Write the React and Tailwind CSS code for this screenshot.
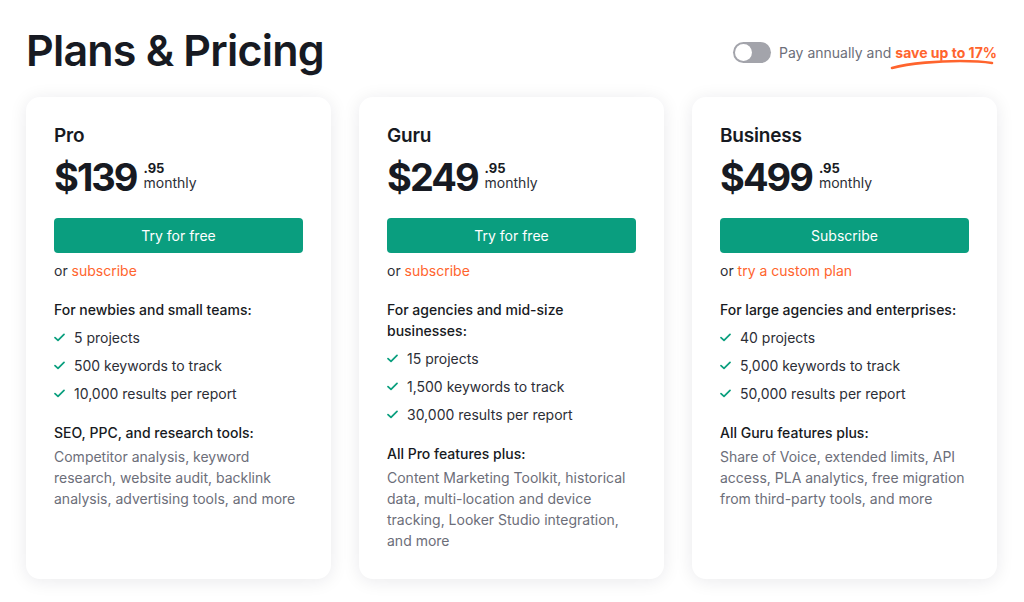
import React from "react";

const plans = [
  {
    name: "Pro",
    price: "$139",
    cta: "Try for free",
    orText: "subscribe",
    heading: "For newbies and small teams:",
    items: ["5 projects", "500 keywords to track", "10,000 results per report"],
    extraHeading: "SEO, PPC, and research tools:",
    extra: "Competitor analysis, keyword research, website audit, backlink analysis, advertising tools, and more",
  },
  {
    name: "Guru",
    price: "$249",
    cta: "Try for free",
    orText: "subscribe",
    heading: "For agencies and mid-size businesses:",
    items: ["15 projects", "1,500 keywords to track", "30,000 results per report"],
    extraHeading: "All Pro features plus:",
    extra: "Content Marketing Toolkit, historical data, multi-location and device tracking, Looker Studio integration, and more",
  },
  {
    name: "Business",
    price: "$499",
    cta: "Subscribe",
    orText: "try a custom plan",
    heading: "For large agencies and enterprises:",
    items: ["40 projects", "5,000 keywords to track", "50,000 results per report"],
    extraHeading: "All Guru features plus:",
    extra: "Share of Voice, extended limits, API access, PLA analytics, free migration from third-party tools, and more",
  },
];

function Check() {
  return (
    <svg width="11" height="9" viewBox="0 0 11 9" fill="none" className="shrink-0">
      <path d="M1 4.6 L4 7.4 L10 1.4" stroke="#0a9f7e" strokeWidth="1.7" strokeLinecap="round" strokeLinejoin="round" />
    </svg>
  );
}

function Card({ p }) {
  return (
    <div className="w-[305px] h-[482px] bg-white rounded-[14px] shadow-[0_2px_18px_rgba(20,20,40,0.09)] px-[28px] pt-[27px] flex flex-col text-[#171a22]">
      <div className="text-[19px] leading-[24px] font-semibold tracking-[-0.2px]">{p.name}</div>
      <div className="flex items-start mt-[7px] h-[44px]">
        <span className="text-[38px] leading-[44px] font-bold tracking-[-2px]">{p.price}</span>
        <div className="flex flex-col ml-[7px] mt-[6px]">
          <span className="text-[13px] leading-[14px] font-bold">.95</span>
          <span className="text-[14px] leading-[15px] text-[#2c2e36]">monthly</span>
        </div>
      </div>
      <button className="mt-[19px] h-[35px] w-full rounded-[4px] bg-[#0a9e7f] text-white text-[14px]">{p.cta}</button>
      <div className="mt-[7px] text-[14px] leading-[21px] text-[#2c2e36]">
        or <span className="text-[#ff642d]">{p.orText}</span>
      </div>
      <div className="mt-[18px] text-[14px] leading-[21px] font-medium">{p.heading}</div>
      <div className="mt-[7px] flex flex-col gap-[7px]">
        {p.items.map((it) => (
          <div key={it} className="flex items-center gap-[9px] text-[14px] leading-[21px] text-[#2c2e36]">
            <Check />
            <span>{it}</span>
          </div>
        ))}
      </div>
      <div className="mt-[18px] text-[14px] leading-[21px] font-medium">{p.extraHeading}</div>
      <div className="mt-[3px] text-[14px] leading-[21px] text-[#6c6e79]">{p.extra}</div>
    </div>
  );
}

export default function App() {
  return (
    <div className="w-[1024px] h-[602px] bg-white overflow-hidden" style={{ fontFamily: "Inter, 'Noto Sans', sans-serif" }}>
      <div className="flex items-center justify-between pl-[26px] pr-[27px] pt-[24px] h-[97px] pb-[22px]">
        <h1 className="text-[43px] leading-[52px] font-semibold tracking-[-0.8px] text-[#171a22]">Plans &amp; Pricing</h1>
        <div className="flex items-center mt-[6px]">
          <div className="w-[38px] h-[21px] rounded-full bg-[#a3a4ab] flex items-center px-[2px]">
            <div className="w-[17px] h-[17px] rounded-full bg-white" />
          </div>
          <span className="ml-[8px] text-[14px] text-[#6c6e79]">Pay annually and</span>
          <span className="relative ml-[4px] text-[14px] font-bold text-[#ff642d]">
            save up to 17%
            <svg className="absolute left-[-5px] top-[16px]" width="106" height="12" viewBox="0 0 106 12" fill="none">
              <path d="M2 10 C 20 5, 50 3, 70 3 C 85 3, 96 4, 102 5" stroke="#ff642d" strokeWidth="2.6" strokeLinecap="round" />
            </svg>
          </span>
        </div>
      </div>
      <div className="flex gap-[28px] pl-[26px]">
        {plans.map((p) => (
          <Card key={p.name} p={p} />
        ))}
      </div>
    </div>
  );
}
